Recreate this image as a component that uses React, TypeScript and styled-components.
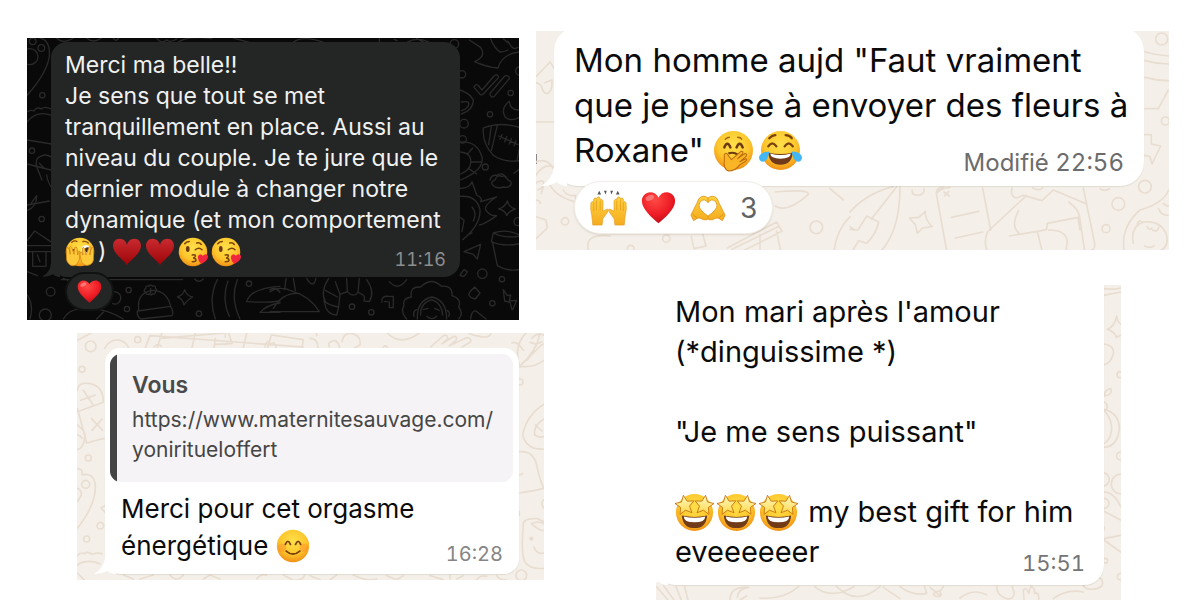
import React from "react";
import styled, { createGlobalStyle, css } from "styled-components";

const GlobalStyle = createGlobalStyle`
  * { box-sizing: border-box; }
  body { margin: 0; background: #fff; font-family: Inter, "Liberation Sans", sans-serif; }
`;

const Page = styled.main`
  display: grid;
  grid-template-columns: minmax(0, 517fr) minmax(0, 625fr);
  padding: 31px 31px 0 27px;
`;

const Column = styled.div<{ $side: "left" | "right" }>`
  display: flex;
  flex-direction: column;
  ${(p) =>
    p.$side === "left"
      ? css`gap: 13px; padding-top: 7px;`
      : css`gap: 35px; margin-left: -8px;`}
`;

const Shot = styled.article<{ $dark?: boolean; $margin: string; $padding: string }>`
  position: relative;
  isolation: isolate;
  overflow: hidden;
  display: flex;
  flex-direction: column;
  align-items: stretch;
  margin: ${(p) => p.$margin};
  padding: ${(p) => p.$padding};
  background: ${(p) => (p.$dark ? "#090909" : "#f4f0e9")};
`;

const Wallpaper = styled.svg<{ $dark?: boolean }>`
  position: absolute;
  inset: 0;
  z-index: -1;
  width: 100%;
  height: 100%;
  fill: none;
  stroke: ${(p) => (p.$dark ? "#2a2a2a" : "#e8ddd0")};
  stroke-width: ${(p) => (p.$dark ? 4 : 5)};
  stroke-linecap: round;
  stroke-linejoin: round;
`;

/* $bleed pushes the top of the bubble out of the visible part of the shot. */
const Bubble = styled.div<{ $dark?: boolean; $radius: number; $padding: string; $bleed?: number }>`
  position: relative;
  display: flex;
  flex-direction: column;
  margin-top: -${(p) => p.$bleed ?? 0}px;
  padding: ${(p) => p.$padding};
  border-radius: ${(p) => p.$radius}px;
  background: ${(p) => (p.$dark ? "#242626" : "#fff")};
  color: ${(p) => (p.$dark ? "#f1f1f1" : "#0b0b0b")};
  box-shadow: 0 1px 1px ${(p) => (p.$dark ? "transparent" : "rgba(90, 70, 40, 0.12)")};
`;

const Tail = styled.svg<{ $dark?: boolean; $size: number }>`
  position: absolute;
  left: ${(p) => -Math.round(p.$size / 2)}px;
  bottom: 0;
  width: ${(p) => p.$size}px;
  height: ${(p) => p.$size}px;
  fill: ${(p) => (p.$dark ? "#242626" : "#fff")};
`;

const Message = styled.p<{ $size: number; $line: number; $inset?: number }>`
  margin: 0;
  padding-left: ${(p) => p.$inset ?? 0}px;
  font-size: ${(p) => p.$size}px;
  line-height: ${(p) => p.$line}px;
`;

const Line = styled.span`
  display: flex;
  align-items: center;
  height: 1lh;
  white-space: pre;
`;

const Stamp = styled.footer<{ $size: number; $color: string; $drop?: number; $inset?: number }>`
  align-self: flex-end;
  margin-top: -${(p) => p.$size - (p.$drop ?? 0)}px;
  padding-right: ${(p) => p.$inset ?? 0}px;
  font-size: ${(p) => p.$size}px;
  line-height: ${(p) => p.$size}px;
  font-variant-numeric: tabular-nums;
  color: ${(p) => p.$color};
`;

const Quote = styled.blockquote`
  margin: 0 0 8px;
  padding: 16px 15px 17px 22px;
  border-radius: 11px;
  background: linear-gradient(90deg, #444 7px, #f5f3f5 7px);
  color: #454545;
`;

const QuoteAuthor = styled.strong`
  display: block;
  font-size: 23px;
  line-height: 30px;
  font-weight: 600;
  color: #4a4a4a;
`;

const QuoteLink = styled.a`
  display: block;
  margin-top: 5px;
  font-size: 21px;
  line-height: 30px;
  color: inherit;
  text-decoration: none;
`;

const Reactions = styled.div<{ $dark?: boolean }>`
  position: relative;
  align-self: flex-start;
  display: flex;
  align-items: center;
  ${(p) =>
    p.$dark
      ? css`
          margin: -5px 0 0 14px;
          height: 39px;
          padding: 0 10px;
          border: 2px solid #111212;
          border-radius: 20px;
          background: #242626;
        `
      : css`
          gap: 14px;
          margin: -5px 0 0 20px;
          height: 53px;
          padding: 0 15px;
          border-radius: 27px;
          background: #fff;
          border: 1px solid #f1ede6;
          box-shadow: 0 1px 2px rgba(90, 70, 40, 0.15);
        `}
`;

const Count = styled.span`
  font-size: 28px;
  line-height: 32px;
  color: #616263;
`;

const Glyph = styled.svg<{ $size: number; $gap?: number }>`
  flex: none;
  width: ${(p) => p.$size}px;
  height: ${(p) => p.$size}px;
  margin-right: ${(p) => p.$gap ?? 0}px;
  overflow: visible;
`;

type EmojiProps = { size: number; gap?: number };

function Emoji({ size, gap, label, children }: EmojiProps & { label: string; children: React.ReactNode }) {
  return (
    <Glyph viewBox="0 0 40 40" role="img" aria-label={label} $size={size} $gap={gap}>
      {children}
    </Glyph>
  );
}

const Face = () => <circle cx="20" cy="20" r="19" fill="url(#face)" />;

const heartPath =
  "M20 38C13 32 1 22 1 12.500C1 6.500 5.500 2.500 10.500 2.500C14.500 2.500 18 4.500 20 8.500C22 4.500 25.500 2.500 29.500 2.500C34.500 2.500 39 6.500 39 12.500C39 22 27 32 20 38Z";

const Heart = (p: EmojiProps) => (
  <Emoji {...p} label="cœur rouge">
    <path d={heartPath} fill="url(#heart)" />
    <ellipse cx="10" cy="9" rx="5" ry="3" fill="#fff" opacity=".3" transform="rotate(-25 10 9)" />
  </Emoji>
);

const SuitHeart = (p: EmojiProps) => (
  <Emoji {...p} label="cœur de cartes">
    <path
      d="M20 39C17 32 0 23 0 11C0 5 4 1 9.500 1C15 1 19 5 20 10C21 5 25 1 30.500 1C36 1 40 5 40 11C40 23 23 32 20 39Z"
      fill="url(#suit)"
    />
  </Emoji>
);

const Peeking = (p: EmojiProps) => (
  <Emoji {...p} label="visage qui regarde entre les doigts">
    <Face />
    <path d="M9 7q4-3 7-1M24 6q4-1 7 2" stroke="#8b4a10" strokeWidth="1.800" fill="none" strokeLinecap="round" />
    <ellipse cx="28" cy="17" rx="6.500" ry="6" fill="#fff" />
    <circle cx="30" cy="17" r="3.500" fill="#43302a" />
    <path d="M9 19q3-4 7 0" stroke="#6b3a12" strokeWidth="2" fill="none" />
    <g fill="#fdc93b" stroke="#cf7f10" strokeWidth="1" strokeLinejoin="round">
      <path d="M2 20Q1 14 4 14Q6 15 7 23L6 14Q8 11 9 14L12 23L13 14Q15 12 16 15L17 24L18 19Q21 18 20 22L19 31Q15 40 8 38Q1 34 2 26Z" />
      <path d="M38 20Q39 14 36 14Q34 16 33 24L35 14Q33 11 32 14L28 24L26 15Q24 12 23 16L24 24L22 20Q19 20 20 24L22 33Q26 40 33 37Q39 34 38 26Z" />
    </g>
  </Emoji>
);

const Kiss = (p: EmojiProps) => (
  <Emoji {...p} label="visage envoyant un bisou">
    <Face />
    <ellipse cx="13" cy="16" rx="2.500" ry="4" fill="#6b3a12" />
    <path
      d="M23 17q5-4 9 0M9 9q2-3 6-3M25 8q4-1 6 2M19 24q5-1 4 2q-1 2-3 2q4 0 4 3q0 2-5 2"
      stroke="#7b420f"
      strokeWidth="2"
      fill="none"
      strokeLinecap="round"
    />
    <path d="M31 36Q25 30 27 25Q30 21 33 25Q37 21 40 25Q41 31 31 36Z" fill="#f0273d" />
  </Emoji>
);

const Giggle = (p: EmojiProps) => (
  <Emoji {...p} label="visage avec la main sur la bouche">
    <Face />
    <path d="M11 17q3-7 6 0M23 17q3-7 6 0" stroke="#6b3a12" strokeWidth="2.400" fill="none" strokeLinecap="round" />
    <path d="M12 9q2-2 4-2M24 7q3 0 4 2" stroke="#a8650f" strokeWidth="1.400" fill="none" strokeLinecap="round" />
    <path d="M15 23q5-2 9 1" stroke="#6b3a12" strokeWidth="2" fill="none" />
    <path
      d="M11 24Q13 21 15 25L18 29L27 21Q30 20 29 23L24 28L31 23Q34 23 32 26L26 31L32 28Q34 29 31 31L26 34Q22 40 15 40Q10 38 11 30Z"
      fill="#f9b526"
      stroke="#bd6c0c"
      strokeWidth="1"
      strokeLinejoin="round"
    />
  </Emoji>
);

const Joy = (p: EmojiProps) => (
  <Emoji {...p} label="visage riant aux larmes">
    <Face />
    <path d="M8 16q4-6 8 0M24 16q4-6 8 0M9 8q3-3 6-3M25 5q4 0 6 3" stroke="#7b420f" strokeWidth="2.200" fill="none" strokeLinecap="round" />
    <path d="M8 22Q20 25 32 22Q31 34 20 34Q9 34 8 22Z" fill="#70391a" />
    <path d="M10 23Q20 26 30 23Q30 28 20 28Q10 28 10 23Z" fill="#fff" />
    <path d="M9 21Q1 21-1 26Q-1 31 3 31Q8 30 9 21ZM31 21Q39 21 41 26Q41 31 37 31Q32 30 31 21Z" fill="#43b7f3" />
  </Emoji>
);

const Smile = (p: EmojiProps) => (
  <Emoji {...p} label="visage souriant">
    <Face />
    <circle cx="7" cy="22" r="5" fill="#ff7a2e" opacity=".35" />
    <circle cx="33" cy="22" r="5" fill="#ff7a2e" opacity=".35" />
    <path d="M11 18q3-7 6 0M23 18q3-7 6 0M12 26Q20 33 28 26" stroke="#7b420f" strokeWidth="2.200" fill="none" strokeLinecap="round" />
  </Emoji>
);

const star = "M0-9L2.700-3L9-2.400L4.300 2L5.700 8.500L0 5.300L-5.700 8.500L-4.300 2L-9-2.400L-2.700-3Z";

const StarStruck = (p: EmojiProps) => (
  <Emoji {...p} label="visage avec des étoiles dans les yeux">
    <Face />
    <path d="M7 23Q20 26 33 23Q32 36 20 36Q8 36 7 23Z" fill="#713b18" />
    <path d="M9 24Q20 27 31 24Q31 30 20 30Q9 30 9 24Z" fill="#fff" />
    <g fill="url(#star)" stroke="#c6720c" strokeWidth=".8" strokeLinejoin="round">
      <path d={star} transform="translate(10 12) rotate(-8) scale(1.080)" />
      <path d={star} transform="translate(30 12) rotate(8) scale(1.080)" />
    </g>
  </Emoji>
);

const RaisedHands = (p: EmojiProps) => (
  <Emoji {...p} label="mains levées">
    <path d="M8 6L10 2L12 6ZM15 2L18 2L17 6ZM25 2L22 2L23 6ZM32 6L30 2L28 6Z" fill="#555" />
    <g fill="url(#hand)" stroke="#e39a1a" strokeWidth=".7" strokeLinejoin="round">
      <path d="M3 39L2 29Q0 22 1 15Q2 12 4 15L4 11Q6 8 7 11L7 10Q9 7 11 10L11 12Q13 10 14 13L14 24L18 22Q21 21 19 25L14 32L13 39Z" />
      <path d="M37 39L38 29Q40 22 39 15Q38 12 36 15L36 11Q34 8 33 11L33 10Q31 7 29 10L29 12Q27 10 26 13L26 24L22 22Q19 21 21 25L26 32L27 39Z" />
    </g>
    <path d="M4 15V24M7 12V23M11 13V23M36 15V24M33 12V23M29 13V23" stroke="#e39a1a" strokeWidth=".8" />
  </Emoji>
);

const HeartHands = (p: EmojiProps) => (
  <Emoji {...p} label="mains en forme de cœur">
    <path
      d="M1 28L8 14Q10 7 15 7Q18 7 20 9Q22 7 25 7Q30 7 32 14L39 28L36 34L31 31Q28 31 25 33L21 33L20 32L19 33L15 33Q12 31 9 31L4 34Z"
      fill="url(#hand)"
      stroke="#dd9316"
      strokeWidth=".9"
      strokeLinejoin="round"
    />
    <path d="M20 29Q10 22 10 17Q11 11 16 11Q19 12 20 14Q21 12 24 11Q29 11 30 17Q30 22 20 29Z" fill="#fff" stroke="#dd9316" strokeWidth=".9" />
    <path d="M20 9V14M20 29V32M3 27L8 31M37 27L32 31" stroke="#dd9316" strokeWidth="1" />
  </Emoji>
);

const Defs = styled.svg`
  position: absolute;
  width: 0;
  height: 0;
`;

/* Gradients shared by every emoji on the page. */
const Palette = () => (
  <Defs aria-hidden="true">
    <defs>
      <radialGradient id="face" cx=".5" cy=".35" r=".68">
        <stop offset="0" stopColor="#ffe04a" />
        <stop offset=".6" stopColor="#fdc62c" />
        <stop offset="1" stopColor="#ee8a12" />
      </radialGradient>
      <radialGradient id="heart" cx=".4" cy=".25" r=".8">
        <stop offset="0" stopColor="#ff4a45" />
        <stop offset=".6" stopColor="#ee1c25" />
        <stop offset="1" stopColor="#b80d16" />
      </radialGradient>
      <linearGradient id="suit" x1="0" y1="0" x2="0" y2="1">
        <stop offset="0" stopColor="#c92a2f" />
        <stop offset="1" stopColor="#9b0508" />
      </linearGradient>
      <linearGradient id="star" x1="0" y1="0" x2="0" y2="1">
        <stop offset="0" stopColor="#fff9c4" />
        <stop offset="1" stopColor="#ffd94d" />
      </linearGradient>
      <linearGradient id="hand" x1="0" y1="0" x2="0" y2="1">
        <stop offset="0" stopColor="#ffd23e" />
        <stop offset="1" stopColor="#f5ac1f" />
      </linearGradient>
    </defs>
  </Defs>
);

const BubbleTail = ({ dark, size }: { dark?: boolean; size: number }) => (
  <Tail viewBox="0 0 20 20" $dark={dark} $size={size} aria-hidden="true">
    <path d="M10 0H20V20H18Q14 19 12 17Q7 20 0 20Q9 15 10 5Z" />
  </Tail>
);

const third = (x: number, y: number) => `translate(${x} ${y}) scale(.33333)`;

const NightDoodles = () => (
  <Wallpaper $dark aria-hidden="true">
    <g transform={third(-7, -8)}>
      <circle cx="38" cy="34" r="10" /><circle cx="64" cy="54" r="10" /><circle cx="30" cy="80" r="24" />
      <circle cx="67" cy="196" r="8" /><circle cx="36" cy="362" r="8" />
      <path d="M60 24Q92 30 88 80Q80 130 22 195M22 245q14-6 20-2q8-14 22-6q10-10 30 0M22 275Q50 240 95 256M22 330L95 342M22 402L92 420M50 410Q45 385 60 380Q75 370 92 380M58 400l14 14M66 450L50 410M110 24q20 20 50 0M200 24q20 18 44 0" />
      <path d="M280 24q6 14 16 0M410 24q14 20 30 6q12 10 30-4M475 36q30-20 100-10M640 24l50 14" />
    </g>
    <g transform={third(243, -8)}>
      <path d="M68 38q30-24 95 0M328 24v14M373 28l8 4M410 38q30-20 70 0M440 26l20 10" />
      <circle cx="553" cy="42" r="13" /><circle cx="576" cy="133" r="11" /><circle cx="722" cy="189" r="8" />
      <circle cx="660" cy="253" r="8" /><circle cx="582" cy="281" r="13" /><circle cx="578" cy="328" r="11" /><circle cx="750" cy="123" r="13" />
      <path d="M598 30L632 52Q650 80 614 95Q650 112 684 114Q694 74 746 66M662 26Q670 50 690 66Q704 66 714 60M714 34q14 30 30 18M700 26l14 12" />
      <path d="M612 172q6-14 14-4l10 12L672 138q12-8 14 4L640 192q-8 6-12-2ZM660 190l44-52q14-4 14 8L672 200q-12 4-12-10Z" />
      <path d="M718 214Q690 236 706 262Q724 276 748 262M718 214Q720 240 746 240" />
      <path d="M640 294Q690 274 748 292M640 294Q636 340 670 376Q700 398 748 392M664 288L656 344M682 286L664 362M686 318L744 344M696 314l-6 14M710 320l-6 16M724 326l-6 16M738 332l-6 16M748 356L742 388" />
      <path d="M570 180Q600 190 610 210Q610 240 574 252M574 216q30-6 20 14q-8 10-20 12" />
      <path d="M572 336Q620 332 636 380Q644 420 572 450M572 366Q606 370 602 400Q600 420 572 432M594 370l14-16M604 396h30M596 416l24 16" />
      <circle cx="646" cy="411" r="9" />
      <path d="M660 450q4-16 20-14q18-12 28 8M732 430l16-12" />
    </g>
    <g transform={third(-7, 137)}>
      <path d="M22 90L88 78M22 106Q50 96 50 62L34 84M80 0q4 24 14 36M22 196L44 168L92 200M22 212H92M22 230H92M38 230h40v44h-40ZM22 290l30 12M52 240L60 260" />
      <circle cx="65" cy="132" r="8" /><circle cx="92" cy="350" r="13" /><circle cx="76" cy="420" r="18" />
      <circle cx="326" cy="345" r="8" /><circle cx="321" cy="402" r="8" /><circle cx="687" cy="326" r="8" /><circle cx="537" cy="416" r="8" />
      <path d="M22 360q20 30 8 72M124 314H488M130 310l14 6M284 350q20 4 18 22q-6 20-24 14M130 432Q150 396 200 404Q250 396 310 432M230 432l20-20" />
      <path d="M356 404Q350 350 400 346Q444 350 452 396M352 408L452 394Q462 412 456 422L362 432Q350 424 352 408Z" />
      <path d="M376 352q-8-8 2-12q-2-10 8-6q6-8 12 0q10-4 8 6q8 4 0 10q0 10-8 6q-4 8-10 0q-8 6-12-4M392 340v14" />
      <path d="M494 344Q500 364 518 366Q500 376 492 390Q488 372 472 366Q490 360 494 344ZM524 312q12 14 26 0" />
      <path d="M592 314Q564 370 586 432M624 318Q604 370 628 424M680 380Q690 340 780 334M680 380Q740 384 780 378M720 412Q740 390 780 384M652 314Q630 370 660 432M720 412H780" />
    </g>
    <g transform={third(243, 137)}>
      <path d="M0 350Q30 330 70 350Q120 364 148 410H0M48 310l-4 34M70 310l6 36M0 344q16-10 30 8M10 400Q40 350 90 356M110 310q20 34 28 0" />
      <path d="M176 310Q150 350 166 380Q176 390 206 396L200 420Q180 420 168 400L162 376M196 320L210 358L232 350L230 310M268 310L264 352Q250 370 232 350M290 314Q316 350 298 380L282 378Q290 360 264 352M166 346l36 20M210 358L206 396" />
      <circle cx="246" cy="395" r="8" /><circle cx="304" cy="412" r="8" /><circle cx="637" cy="296" r="14" /><circle cx="696" cy="313" r="8" /><circle cx="667" cy="385" r="8" /><circle cx="744" cy="140" r="12" />
      <path d="M336 382q-4-20 20-18h14v34h-12V380M344 380h8M358 320q26 30 52-6" />
      <path d="M410 432Q390 410 402 392Q396 370 424 366Q418 334 452 336Q484 304 514 334Q548 330 546 362Q576 372 566 396Q582 416 566 432M442 432Q440 376 486 366Q530 376 530 432M452 420Q450 384 486 374Q516 386 518 420M460 404l14-4M494 400l14 6M470 424q16 14 30 0M440 404q-12 4-8 20M532 406q10 6 4 18" />
      <path d="M570 300l12-16l10 6l-6 10q-8 8-16 0M600 350l14-14l16 18l-14 18q-14-2-20-12ZM700 344l12 18l10-2l-4 18l22-2l-12 28M700 344l4 34l16 4l6 22" />
      <path d="M670 32q-12-10 6-18q4-16 20-10q14-4 16 10q16 6 10 16q-8 10-20 6q-20 6-32-4Z" />
      <path d="M712 78Q716 96 736 102Q716 108 710 122Q706 106 686 102Q706 96 712 78Z" />
      <path d="M570 64Q620 60 630 104Q632 150 578 194M570 40Q600 40 606 20L620 60Q640 70 632 80L680 66Q640 90 648 106Q660 124 680 122Q640 150 628 150M606 96q16 20 4 42M572 128l10 8l-6 34M592 180l14-6" />
      <path d="M582 230L632 208L622 252L610 238ZM664 200L670 174Q710 160 748 180M664 200Q700 216 748 206M668 204L682 272Q710 290 748 284M670 174Q700 190 748 184" />
      <path d="M602 432q2-26 16-24l30 24" />
    </g>
  </Wallpaper>
);

const FlowerDoodles = () => (
  <Wallpaper aria-hidden="true">
    <g transform={third(-6, -11)}>
      <path d="M18 170L60 126L76 150M18 188q10 2 16 10q6 26 20 22q14-8 12-40l-22 8M18 306H74" />
    </g>
    <rect x="0" y="123" width="1" height="10" fill="#888" stroke="none" />
    <g transform={third(-6, 99)}>
      <path d="M18 96q34-14 52 20M18 136Q40 100 70 110M24 180q20-10 16-26q-16-2-22 6M34 190l8-28M60 166Q80 200 130 214M100 180Q110 200 136 196L140 226M18 260l30 10l4 24L18 326M18 210q10 0 14 10" />
      <circle cx="105" cy="274" r="11" /><circle cx="409" cy="326" r="11" /><circle cx="859" cy="292" r="19" /><circle cx="302" cy="356" r="10" />
      <path d="M176 362Q160 310 240 318M484 320L492 356L528 348L518 312M592 354L740 276L756 304L640 362M606 358L744 290M690 314V362M740 304L752 362M736 186Q850 176 832 196Q770 250 736 228M912 362Q920 300 960 260M900 176l40 34" />
    </g>
    <g transform={third(314, 99)}>
      <path d="M0 246Q50 190 130 170M150 170Q150 300 94 362M140 170L64 268M0 298L24 300L50 258L86 276Q80 310 50 340L26 332L8 362M0 290l14 10" />
      <path d="M226 244Q224 268 246 290L218 294L202 310L196 284L178 264L206 262Z" />
      <path d="M186 180q0 16 18 16q20-2 18-20M280 172Q254 174 260 196L290 362M260 190q10-16 40-18M282 186l16 12M296 184L284 198M304 262L386 244M316 324L398 306M398 174L422 300" />
      <path d="M486 174Q480 200 500 204L520 196L576 212L610 180M530 196L412 306Q400 340 412 362M506 242Q480 290 508 310M478 318L562 304L576 362M556 306L590 298L592 280L684 262L690 300M656 216Q690 240 690 270L704 362M596 300Q650 300 652 336L648 362M700 174L734 340Q736 362 716 362M610 180L710 222M548 174q20 10 30 0" />
      <circle cx="805" cy="222" r="19" /><circle cx="885" cy="170" r="19" /><circle cx="768" cy="296" r="12" />
      <path d="M822 362Q812 290 870 240Q940 220 956 180M850 340Q840 290 880 276Q930 270 948 310Q960 350 930 362M862 282q4-14 14-6M892 290q4 14 14 4M908 300q14 8 18-8M884 348q14 8 28 0M926 236q6 20 28 20M940 220q8 10 16 8" />
      <path d="M884 14h20v28l28 6L906 102L900 80L884 76M750 176q14 10 28 0" />
    </g>
    <g transform={third(554, -11)}>
      <path d="M165 96Q200 106 235 108M165 122Q200 132 235 132M165 172Q200 182 235 182M165 266H205L235 210" />
      <circle cx="215" cy="57" r="18" /><circle cx="226" cy="303" r="12" />
    </g>
  </Wallpaper>
);

const QuoteDoodles = () => (
  <Wallpaper aria-hidden="true">
    <g transform={third(-7, -8)}>
      <circle cx="62" cy="64" r="16" /><circle cx="203" cy="44" r="9" /><circle cx="36" cy="133" r="9" /><circle cx="55" cy="399" r="9" /><circle cx="91" cy="602" r="10" /><circle cx="50" cy="642" r="9" /><circle cx="47" cy="478" r="12" />
      <path d="M22 46Q60 26 66 22M104 70Q120 40 150 46Q172 54 176 70M226 68L240 32L700 66M276 22L262 68M376 24L366 68M276 40L480 22M436 40L432 70M476 24L486 56L436 58M252 66q12-14 22-2M466 22v14M460 56q10 6 12-6M530 24L520 68M592 70L604 30L700 44L696 70M584 66q10-30 18-6q12-16 16 8M740 22v10" />
      <path d="M22 196Q24 170 60 176Q100 184 100 230M22 260L100 232M40 196l28 42M32 226l44-16M22 250L50 354L102 340M64 280l34 36M96 282L66 316M22 300Q50 320 44 340Q40 370 22 374M22 330q10 0 14 10" />
      <path d="M22 432Q40 430 36 450Q70 440 76 480Q78 540 22 610M22 490Q46 500 22 530M94 548l10-6M94 550l12 12M22 692q10-12 22-6q10-8 22 2q14-6 30-2M22 720Q50 700 90 716M22 744l20 20M160 750l30 12M210 762l40-12M300 750q20 24 40 0M400 762l20-12l30 12M560 762q10-16 30-12M640 750l30 16q30 0 34-16" />
    </g>
    <g transform={third(233, -8)}>
      <path d="M0 40q24 0 24 28M58 66Q50 50 76 46Q90 60 88 68M96 50Q100 22 128 26Q154 34 150 60L134 68M230 22Q270 66 328 24M362 66L398 34Q410 24 414 40L396 56L432 34Q444 34 438 46L418 62L470 38Q488 40 480 52L456 66M478 26q60 20 64 0M220 66q6-6 12 0" />
      <path d="M628 124Q610 60 650 22M628 124Q680 80 690 24M628 124Q670 130 702 106M640 76q-20-30-34-22M650 106Q690 60 702 56M666 40Q680 22 700 30M660 52q20 10 36-2M630 126L612 100" />
      <circle cx="630" cy="171" r="9" />
      <path d="M702 238Q650 270 638 330Q650 376 702 372M702 282Q670 300 674 330Q690 340 702 334M676 300l20 18M628 380Q670 376 680 420Q690 470 702 490M628 450l10-4M628 504Q680 496 702 490M702 524q-14 10 0 26M628 560v10" />
      <path d="M640 600Q636 580 680 580L702 590M640 600Q632 680 644 710Q660 734 702 730M664 596Q690 620 702 616M664 596q20-10 38 0M672 666Q680 690 702 684" />
      <circle cx="664" cy="641" r="4" fill="#e7dccf" /><circle cx="634" cy="751" r="16" />
      <path d="M0 752l30 12M60 764l20-14M130 750q40 20 70 12M230 752l30 12l20-12M360 752l40 12M420 750v12M440 762l20-10M500 764q10-14 30-10M560 752q10 14 30 12" />
    </g>
  </Wallpaper>
);

const GiftDoodles = () => (
  <Wallpaper aria-hidden="true">
    <g transform={third(-6, 185)}>
      <path d="M20 350L54 390M40 346L72 390M78 350L94 390M104 350L114 390M240 390Q240 350 290 352M262 382Q264 356 296 352M330 384Q400 390 446 350M494 350Q540 390 612 350M560 350q60 60 130 0M700 352l50 34M270 390l20-12" />
    </g>
    <g transform={third(244, -15)}>
      <path d="M612 56Q640 60 662 54M612 76L662 66M650 138Q652 156 662 162M650 138Q644 170 622 178Q644 186 650 202M662 196L650 202M612 222Q644 226 640 252Q632 280 612 284M614 378Q612 360 632 356Q640 372 614 378M612 396q14 6 8 20M612 418Q660 430 658 480Q650 530 612 532M612 420Q646 460 630 500Q622 516 612 520" />
      <circle cx="660" cy="314" r="9" /><circle cx="662" cy="558" r="12" /><circle cx="608" cy="628" r="20" /><circle cx="664" cy="642" r="30" /><circle cx="612" cy="700" r="15" /><circle cx="662" cy="920" r="10" /><circle cx="616" cy="872" r="7" />
      <path d="M612 666q30 0 50 44M612 724L662 750M612 806L662 796M612 810L662 846M612 770v10M550 948Q556 930 580 934Q590 920 604 926Q616 950 590 956Q560 962 550 948" />
      <path d="M290 950Q290 976 320 986Q344 990 342 964L336 950M372 988L370 960Q380 950 386 970L392 950Q404 950 404 970Q418 966 416 988M0 950Q40 980 80 970L74 950M90 952l32 26M100 972q20-20 24 4q-14 10-24-4M130 950l-10 14M460 986q40-30 90-20M180 984q40-30 80-10" />
    </g>
  </Wallpaper>
);

export default function App() {
  return (
    <>
      <GlobalStyle />
      <Palette />
      <Page>
        <Column $side="left">
          <Shot $dark $margin="0 25px 0 0" $padding="4px 59px 9px 24px">
            <NightDoodles />
            <Bubble $dark $radius={16} $padding="8px 14px 8px">
              <BubbleTail dark size={18} />
              <Message $size={23} $line={31}>
                <Line>Merci ma belle!!</Line>
                <Line>Je sens que tout se met</Line>
                <Line>tranquillement en place. Aussi au</Line>
                <Line>niveau du couple. Je te jure que le</Line>
                <Line>dernier module à changer notre</Line>
                <Line>dynamique (et mon comportement</Line>
                <Line>
                  <Peeking size={30} gap={3} />
                  {") "}
                  <SuitHeart size={28} gap={5} />
                  <SuitHeart size={28} gap={4} />
                  <Kiss size={30} gap={3} />
                  <Kiss size={30} />
                </Line>
              </Message>
              <Stamp $size={18} $color="#8d8e8e" $drop={2}>
                <time>11:16</time>
              </Stamp>
            </Bubble>
            <Reactions $dark>
              <Heart size={25} />
            </Reactions>
          </Shot>

          <Shot $margin="0 0 0 50px" $padding="15px 25px 6px 28px">
            <QuoteDoodles />
            <Bubble $radius={15} $padding="6px 6px 10px 5px">
              <BubbleTail size={22} />
              <Quote>
                <QuoteAuthor>Vous</QuoteAuthor>
                <QuoteLink href="https://www.maternitesauvage.com/yoniritueloffert">
                  <Line>https://www.maternitesauvage.com/</Line>
                  <Line>yoniritueloffert</Line>
                </QuoteLink>
              </Quote>
              <Message $size={26} $line={37} $inset={11}>
                <Line>Merci pour cet orgasme</Line>
                <Line>
                  {"énergétique "}
                  <Smile size={34} />
                </Line>
              </Message>
              <Stamp $size={20} $color="#858585" $inset={10}>
                <time>16:28</time>
              </Stamp>
            </Bubble>
          </Shot>
        </Column>

        <Column $side="right">
          <Shot $margin="0" $padding="0 25px 16px 18px">
            <FlowerDoodles />
            <Bubble $radius={24} $padding="11px 20px 11px" $bleed={4}>
              <BubbleTail size={26} />
              <Message $size={33} $line={45}>
                <Line>Mon homme aujd "Faut vraiment</Line>
                <Line>que je pense à envoyer des fleurs à</Line>
                <Line>
                  {'Roxane" '}
                  <Giggle size={41} gap={6} />
                  <Joy size={41} />
                </Line>
              </Message>
              <Stamp $size={24} $color="#6c6c6c" $drop={2}>
                Modifié <time>22:56</time>
              </Stamp>
            </Bubble>
            <Reactions>
              <RaisedHands size={37} />
              <Heart size={35} />
              <HeartHands size={36} />
              <Count>3</Count>
            </Reactions>
          </Shot>

          <Shot $margin="0 48px 0 120px" $padding="0 17px 15px 0">
            <GiftDoodles />
            <Bubble $radius={20} $padding="27px 19px 11px" $bleed={20}>
              <BubbleTail size={24} />
              <Message $size={29} $line={40}>
                <Line>Mon mari après l'amour</Line>
                <Line>(*dinguissime *)</Line>
                <Line />
                <Line>"Je me sens puissant"</Line>
                <Line />
                <Line>
                  <StarStruck size={39} gap={3} />
                  <StarStruck size={39} gap={3} />
                  <StarStruck size={39} gap={2} />
                  {" my best gift for him"}
                </Line>
                <Line>eveeeeeer</Line>
              </Message>
              <Stamp $size={22} $color="#757575" $drop={2}>
                <time>15:51</time>
              </Stamp>
            </Bubble>
          </Shot>
        </Column>
      </Page>
    </>
  );
}
